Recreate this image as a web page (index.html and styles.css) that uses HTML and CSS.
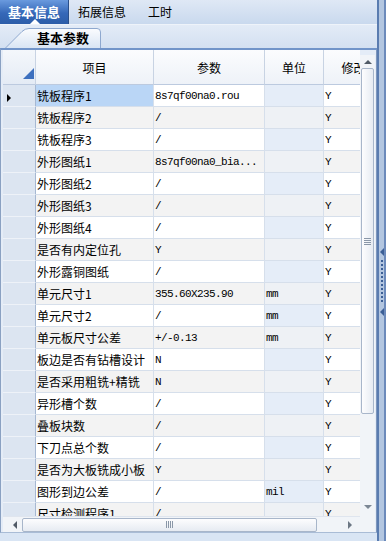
FILE: index.html
```html
<!DOCTYPE html>
<html lang="zh-CN">
<head>
    <meta charset="UTF-8">
    <title>基本信息</title>
    <link rel="stylesheet" href="styles.css">
</head>
<body>
    <div class="window">
        <div class="main">
            <!-- top tabs -->
            <div class="tabbar">
                <div class="tab active">基本信息</div>
                <div class="tab">拓展信息</div>
                <div class="tab">工时</div>
            </div>

            <!-- sub tabs -->
            <div class="subtabs">
                <div class="subtab">
                    <svg class="subtab-shape" width="96" height="20" viewBox="0 0 96 20">
                        <defs>
                            <linearGradient id="tabfill" x1="0" y1="0" x2="0" y2="1">
                                <stop offset="0" stop-color="#fbfcfe"/>
                                <stop offset="1" stop-color="#d9e5f4"/>
                            </linearGradient>
                        </defs>
                        <path d="M0.5 20 L17 3.5 Q20 0.5 24 0.5 L92 0.5 Q95.5 0.5 95.5 4 L95.5 20" fill="url(#tabfill)" stroke="#8ea8cf"/>
                    </svg>
                    <span class="subtab-label">基本参数</span>
                </div>
            </div>

            <!-- grid -->
            <div class="frame">
                <div class="grid-area">
                    <div class="viewport">
                        <table class="grid">
                            <colgroup>
                                <col class="c-rh">
                                <col class="c-item">
                                <col class="c-param">
                                <col class="c-unit">
                                <col class="c-mod">
                            </colgroup>
                            <thead>
                                <tr>
                                    <th class="corner"><span class="corner-mark"></span></th>
                                    <th>项目</th>
                                    <th>参数</th>
                                    <th>单位</th>
                                    <th>修改</th>
                                </tr>
                            </thead>
                            <tbody>
                                <tr><td class="rh"><span class="current"></span></td><td class="item selected">铣板程序1</td><td class="v">8s7qf00na0.rou</td><td class="v unit"></td><td class="v">Y</td></tr>
                                <tr><td class="rh"></td><td class="item">铣板程序2</td><td class="v">/</td><td class="v unit"></td><td class="v">Y</td></tr>
                                <tr><td class="rh"></td><td class="item">铣板程序3</td><td class="v">/</td><td class="v unit"></td><td class="v">Y</td></tr>
                                <tr><td class="rh"></td><td class="item">外形图纸1</td><td class="v">8s7qf00na0_bia...</td><td class="v unit"></td><td class="v">Y</td></tr>
                                <tr><td class="rh"></td><td class="item">外形图纸2</td><td class="v">/</td><td class="v unit"></td><td class="v">Y</td></tr>
                                <tr><td class="rh"></td><td class="item">外形图纸3</td><td class="v">/</td><td class="v unit"></td><td class="v">Y</td></tr>
                                <tr><td class="rh"></td><td class="item">外形图纸4</td><td class="v">/</td><td class="v unit"></td><td class="v">Y</td></tr>
                                <tr><td class="rh"></td><td class="item">是否有内定位孔</td><td class="v">Y</td><td class="v unit"></td><td class="v">Y</td></tr>
                                <tr><td class="rh"></td><td class="item">外形露铜图纸</td><td class="v">/</td><td class="v unit"></td><td class="v">Y</td></tr>
                                <tr><td class="rh"></td><td class="item">单元尺寸1</td><td class="v">355.60X235.90</td><td class="v unit">mm</td><td class="v">Y</td></tr>
                                <tr><td class="rh"></td><td class="item">单元尺寸2</td><td class="v">/</td><td class="v unit">mm</td><td class="v">Y</td></tr>
                                <tr><td class="rh"></td><td class="item">单元板尺寸公差</td><td class="v">+/-0.13</td><td class="v unit">mm</td><td class="v">Y</td></tr>
                                <tr><td class="rh"></td><td class="item">板边是否有钻槽设计</td><td class="v">N</td><td class="v unit"></td><td class="v">Y</td></tr>
                                <tr><td class="rh"></td><td class="item">是否采用粗铣+精铣</td><td class="v">N</td><td class="v unit"></td><td class="v">Y</td></tr>
                                <tr><td class="rh"></td><td class="item">异形槽个数</td><td class="v">/</td><td class="v unit"></td><td class="v">Y</td></tr>
                                <tr><td class="rh"></td><td class="item">叠板块数</td><td class="v">/</td><td class="v unit"></td><td class="v">Y</td></tr>
                                <tr><td class="rh"></td><td class="item">下刀点总个数</td><td class="v">/</td><td class="v unit"></td><td class="v">Y</td></tr>
                                <tr><td class="rh"></td><td class="item">是否为大板铣成小板</td><td class="v">Y</td><td class="v unit"></td><td class="v">Y</td></tr>
                                <tr><td class="rh"></td><td class="item">图形到边公差</td><td class="v">/</td><td class="v unit">mil</td><td class="v">Y</td></tr>
                                <tr><td class="rh"></td><td class="item">尺寸检测程序1</td><td class="v">/</td><td class="v unit"></td><td class="v">Y</td></tr>
                            </tbody>
                        </table>
                    </div>

                    <!-- vertical scrollbar -->
                    <div class="vscroll">
                        <span class="arrow up"></span>
                        <div class="vthumb"><span class="vgrip"></span></div>
                        <span class="arrow down"></span>
                    </div>
                </div>

                <!-- horizontal scrollbar -->
                <div class="hscroll-row">
                    <div class="hscroll">
                        <span class="arrow left"></span>
                        <div class="hthumb"><span class="hgrip"></span></div>
                        <span class="arrow right"></span>
                    </div>
                    <div class="scroll-corner"></div>
                </div>
            </div>
        </div>

        <!-- splitter -->
        <div class="splitter">
            <span class="split-arrow"></span>
            <span class="split-dots"></span>
            <span class="split-arrow"></span>
        </div>
    </div>
</body>
</html>
```

FILE: styles.css
```css
body {
    margin: 0;
    width: 386px;
    height: 541px;
    overflow: hidden;
    background-color: #d9e5f4;
    font-family: "Noto Sans CJK SC", "Liberation Sans", sans-serif;
    font-size: 12px;
    color: #000;
}

.window {
    display: flex;
    height: 541px;
}

.main {
    width: 377px;
    display: flex;
    flex-direction: column;
}

/* top tabs */
.tabbar {
    display: flex;
    height: 24px;
    background: linear-gradient(#dfe8f5, #c9d9ee);
    border-bottom: 1px solid #eef3fa;
}

.tab {
    padding: 0 11px;
    line-height: 23px;
    white-space: nowrap;
}

.tab + .tab {
    padding-left: 9px;
}

.tab + .tab + .tab {
    padding-left: 11px;
}

.tab.active {
    position: relative;
    width: 69px;
    padding: 0;
    box-sizing: border-box;
    text-align: center;
    font-size: 13px;
    font-weight: bold;
    color: #fff;
    background: linear-gradient(#6a9ade, #3568b8 55%, #2c5da9);
    border-right: 1px solid #2a4f8a;
}

.tab.active::after {
    content: "";
    position: absolute;
    left: 30px;
    bottom: 0;
    border-left: 5px solid transparent;
    border-right: 5px solid transparent;
    border-bottom: 5px solid #fff;
}

/* sub tabs */
.subtabs {
    height: 23px;
    display: flex;
    align-items: flex-end;
    background: linear-gradient(#e3ebf7, #d3e0f1);
}

.subtab {
    position: relative;
    width: 96px;
    height: 20px;
    margin-left: 5px;
}

.subtab-shape {
    position: absolute;
    left: 0;
    top: 0;
}

.subtab-label {
    position: relative;
    display: block;
    padding-left: 32px;
    line-height: 20px;
    font-size: 13px;
    font-weight: bold;
}

/* grid frame */
.frame {
    display: flex;
    flex-direction: column;
    border-top: 2px solid #7194c9;
    border-left: 1px solid #8aa1c2;
    border-right: 1px solid #7e97bd;
    border-bottom: 1px solid #a9bcd6;
    padding: 0 1px 0 2px;
    background-color: #e4ecf7;
}

.grid-area {
    display: flex;
    height: 466px;
}

.viewport {
    width: 357px;
    overflow: hidden;
    background-color: #fff;
}

.grid {
    table-layout: fixed;
    border-collapse: separate;
    border-spacing: 0;
    width: 381px;
}

.c-rh { width: 33px; }
.c-item { width: 118px; }
.c-param { width: 111px; }
.c-unit { width: 59px; }
.c-mod { width: 60px; }

.grid thead tr {
    height: 35px;
}

.grid th {
    padding: 0;
    font-weight: normal;
    background: linear-gradient(#fbfcfe, #eef2f8);
    border-right: 1px solid #c8d3e3;
    border-bottom: 1px solid #bccadf;
    white-space: nowrap;
    overflow: hidden;
}

.grid th.corner {
    background: linear-gradient(#f4f7fb, #e4ebf5);
    vertical-align: bottom;
    text-align: right;
}

.corner-mark {
    display: inline-block;
    margin: 0 1px 2px 0;
    border-left: 11px solid transparent;
    border-bottom: 11px solid #3d70bf;
}

.grid tbody tr {
    height: 22px;
}

.grid td {
    padding: 0 0 0 1px;
    border-right: 1px solid #d6dfeb;
    border-bottom: 1px solid #d6dfeb;
    white-space: nowrap;
    overflow: hidden;
}

.grid tbody tr:nth-child(even) td {
    background-color: #f3f3f3;
}

.grid td.rh,
.grid tbody tr:nth-child(even) td.rh {
    padding-left: 4px;
    background-color: #dce5f1;
    border-right: 1px solid #a6b8d2;
    border-bottom: 1px solid #eef2f8;
}

.current {
    display: inline-block;
    border-top: 4px solid transparent;
    border-bottom: 4px solid transparent;
    border-left: 4px solid #000;
    vertical-align: middle;
}

.grid td.item.selected {
    background-color: #bad6f6;
}

.grid td.v {
    font-family: "Liberation Mono", "Noto Sans CJK SC", monospace;
    font-size: 11px;
    letter-spacing: -0.6px;
}

.grid td.unit {
    background-color: #e5edf8;
}

.grid tbody tr:nth-child(even) td.unit {
    background-color: #eef1f5;
}

/* scrollbars */
.vscroll {
    width: 15px;
    margin-top: 5px;
    display: flex;
    flex-direction: column;
    align-items: center;
    background-color: #f1f4f8;
}

.vthumb {
    width: 13px;
    height: 346px;
    box-sizing: border-box;
    margin-top: 4px;
    border: 1px solid #a8b6ca;
    border-radius: 2px;
    background: linear-gradient(90deg, #fdfdfe, #e6ebf2);
    display: flex;
    align-items: center;
    justify-content: center;
}

.vgrip {
    width: 7px;
    height: 7px;
    background: repeating-linear-gradient(#8a97a8 0 1px, transparent 1px 2px);
}

.arrow {
    width: 0;
    height: 0;
}

.arrow.up {
    margin-top: 5px;
    border-left: 4px solid transparent;
    border-right: 4px solid transparent;
    border-bottom: 4px solid #505a66;
}

.arrow.down {
    margin-top: auto;
    margin-bottom: 7px;
    border-left: 4px solid transparent;
    border-right: 4px solid transparent;
    border-top: 4px solid #7c8794;
}

.hscroll-row {
    display: flex;
    height: 16px;
}

.hscroll {
    width: 357px;
    display: flex;
    align-items: center;
    background-color: #f1f4f8;
    border-top: 1px solid #dfe5ee;
}

.arrow.left {
    margin-left: 10px;
    border-top: 4px solid transparent;
    border-bottom: 4px solid transparent;
    border-right: 4px solid #505a66;
}

.arrow.right {
    margin-left: auto;
    margin-right: 8px;
    border-top: 4px solid transparent;
    border-bottom: 4px solid transparent;
    border-left: 4px solid #6c7784;
}

.hthumb {
    width: 295px;
    height: 14px;
    box-sizing: border-box;
    margin-left: 5px;
    border: 1px solid #a8b6ca;
    border-radius: 2px;
    background: linear-gradient(#fdfdfe, #e6ebf2);
    display: flex;
    align-items: center;
    justify-content: center;
}

.hgrip {
    width: 7px;
    height: 7px;
    background: repeating-linear-gradient(90deg, #8a97a8 0 1px, transparent 1px 2px);
}

.scroll-corner {
    width: 15px;
    background-color: #f1f4f8;
}

/* splitter */
.splitter {
    width: 9px;
    box-sizing: border-box;
    border-left: 2px solid #5a7cb0;
    border-right: 2px solid #6c8abb;
    background-color: #b3c6e0;
    display: flex;
    flex-direction: column;
    align-items: center;
    padding-top: 248px;
}

.split-arrow {
    width: 0;
    height: 0;
    border-top: 4px solid transparent;
    border-bottom: 4px solid transparent;
    border-right: 4px solid #3c5f96;
}

.split-dots {
    width: 2px;
    height: 44px;
    margin: 4px 0;
    background: repeating-linear-gradient(#3c5f96 0 2px, transparent 2px 4px);
}
```
